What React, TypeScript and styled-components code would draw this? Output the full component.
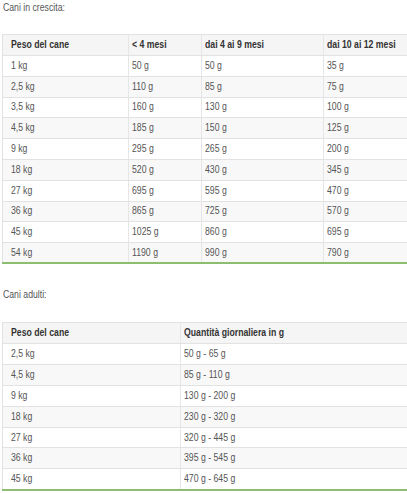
import React from "react";
import styled, { createGlobalStyle } from "styled-components";

const Global = createGlobalStyle`
  html, body { margin: 0; padding: 0; background: #ffffff; overflow: hidden; }
  body { font-family: "Liberation Sans", Arial, sans-serif; }
`;

const Page = styled.div`
  padding: 0 0 0 2px;
  width: 410px;
`;

const Caption = styled.div<{ $top: number }>`
  margin-top: ${(p) => p.$top}px;
  height: 16px;
  line-height: 16px;
  font-size: 10px;
  color: #555;
  padding-left: 1px;
`;

const Squeeze = styled.span`
  display: inline-block;
  white-space: nowrap;
  transform: scaleX(0.87);
  transform-origin: left center;
`;

const Table = styled.table<{ $top: number }>`
  margin-top: ${(p) => p.$top}px;
  width: 410px;
  table-layout: fixed;
  border-collapse: collapse;
  font-size: 10px;
  color: #555;
  border-bottom: 2px solid #8cbd70;
`;

const Row = styled.tr<{ $striped?: boolean }>`
  height: 20.8px;
  background: ${(p) => (p.$striped ? "#f8f8f8" : "#ffffff")};
`;

const HeadRow = styled.tr`
  height: 21px;
  background: #f5f5f5;
`;

const Cell = styled.td<{ $first?: boolean }>`
  padding: 0 0 0 ${(p) => (p.$first ? 8 : 3)}px;
  border: 1px solid #e2e2e2;
  border-right-color: #e6e6e6;
  vertical-align: middle;
  overflow: hidden;
  white-space: nowrap;
  line-height: 12px;
`;

const HeadCell = styled(Cell).attrs({ as: "th" })`
  text-align: left;
  font-weight: bold;
  color: #333;
`;

const growth = [
  ["1 kg", "50 g", "50 g", "35 g"],
  ["2,5 kg", "110 g", "85 g", "75 g"],
  ["3,5 kg", "160 g", "130 g", "100 g"],
  ["4,5 kg", "185 g", "150 g", "125 g"],
  ["9 kg", "295 g", "265 g", "200 g"],
  ["18 kg", "520 g", "430 g", "345 g"],
  ["27 kg", "695 g", "595 g", "470 g"],
  ["36 kg", "865 g", "725 g", "570 g"],
  ["45 kg", "1025 g", "860 g", "695 g"],
  ["54 kg", "1190 g", "990 g", "790 g"],
];

const adults = [
  ["2,5 kg", "50 g - 65 g"],
  ["4,5 kg", "85 g - 110 g"],
  ["9 kg", "130 g - 200 g"],
  ["18 kg", "230 g - 320 g"],
  ["27 kg", "320 g - 445 g"],
  ["36 kg", "395 g - 545 g"],
  ["45 kg", "470 g - 645 g"],
];

export default function App() {
  return (
    <Page>
      <Global />
      <Caption $top={0}>
        <Squeeze>Cani in crescita:</Squeeze>
      </Caption>
      <Table $top={18}>
        <colgroup>
          <col style={{ width: 126 }} />
          <col style={{ width: 73 }} />
          <col style={{ width: 122 }} />
          <col />
        </colgroup>
        <thead>
          <HeadRow>
            {["Peso del cane", "< 4 mesi", "dai 4 ai 9 mesi", "dai 10 ai 12 mesi"].map((h, i) => (
              <HeadCell key={h} $first={i === 0}>
                <Squeeze>{h}</Squeeze>
              </HeadCell>
            ))}
          </HeadRow>
        </thead>
        <tbody>
          {growth.map((r, ri) => (
            <Row key={r[0]} $striped={ri % 2 === 1}>
              {r.map((c, i) => (
                <Cell key={i} $first={i === 0}>
                  <Squeeze>{c}</Squeeze>
                </Cell>
              ))}
            </Row>
          ))}
        </tbody>
      </Table>
      <Caption $top={23}>
        <Squeeze>Cani adulti:</Squeeze>
      </Caption>
      <Table $top={19}>
        <colgroup>
          <col style={{ width: 178 }} />
          <col />
        </colgroup>
        <thead>
          <HeadRow>
            {["Peso del cane", "Quantità giornaliera in g"].map((h, i) => (
              <HeadCell key={h} $first={i === 0}>
                <Squeeze>{h}</Squeeze>
              </HeadCell>
            ))}
          </HeadRow>
        </thead>
        <tbody>
          {adults.map((r, ri) => (
            <Row key={r[0]} $striped={ri % 2 === 1}>
              {r.map((c, i) => (
                <Cell key={i} $first={i === 0}>
                  <Squeeze>{c}</Squeeze>
                </Cell>
              ))}
            </Row>
          ))}
        </tbody>
      </Table>
    </Page>
  );
}
